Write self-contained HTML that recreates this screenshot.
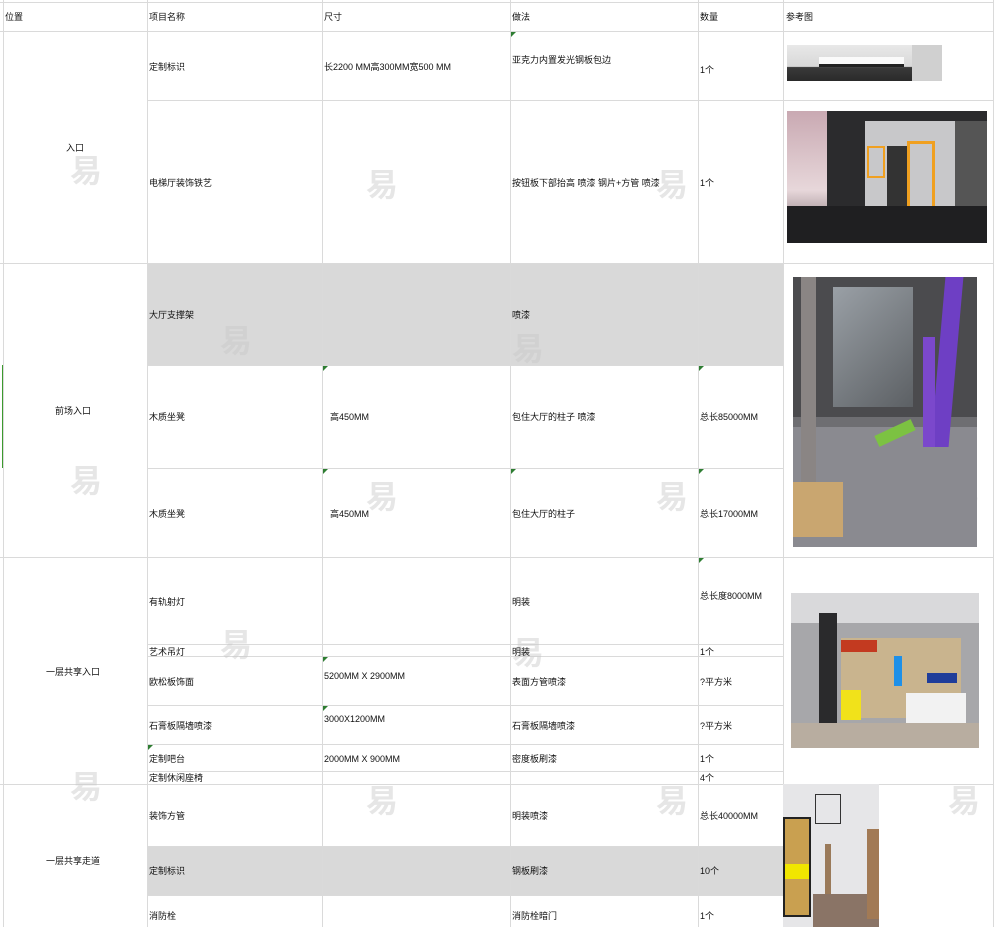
<!DOCTYPE html>
<html><head><meta charset="utf-8"><style>
*{margin:0;padding:0;box-sizing:border-box}
body{width:994px;height:927px;overflow:hidden;background:#fff;position:relative;font-family:"Liberation Sans","Noto Sans CJK SC",sans-serif;font-size:9px;color:#111}
.h{position:absolute;height:1px;background:#dadada}
.v{position:absolute;width:1px;background:#dadada}
.t{position:absolute;line-height:12px;white-space:nowrap}
.g{position:absolute;background:#d9d9d9}
.i{position:absolute;overflow:hidden}
.tri{position:absolute;width:0;height:0;border-top:5px solid #2e7d32;border-right:5px solid transparent}
.w{position:absolute;font-size:32px;line-height:34px;color:rgba(200,200,200,0.45);font-family:"Noto Sans CJK SC",sans-serif;font-weight:bold}
</style></head><body>
<div class="g" style="left:147px;top:263px;width:636px;height:102px"></div>
<div class="g" style="left:147px;top:846px;width:636px;height:49px"></div>
<div style="position:absolute;left:2px;top:365px;width:2px;height:103px;background:#3c9a2e"></div>

<div class="h" style="left:0;top:2px;width:994px"></div>
<div class="h" style="left:0;top:31px;width:994px"></div>
<div class="h" style="left:147px;top:100px;width:847px"></div>
<div class="h" style="left:0;top:263px;width:994px"></div>
<div class="h" style="left:147px;top:365px;width:636px"></div>
<div class="h" style="left:147px;top:468px;width:636px"></div>
<div class="h" style="left:0;top:557px;width:994px"></div>
<div class="h" style="left:147px;top:644px;width:636px"></div>
<div class="h" style="left:147px;top:656px;width:636px"></div>
<div class="h" style="left:147px;top:705px;width:636px"></div>
<div class="h" style="left:147px;top:744px;width:636px"></div>
<div class="h" style="left:147px;top:771px;width:636px"></div>
<div class="h" style="left:0;top:784px;width:994px"></div>
<div class="h" style="left:147px;top:846px;width:636px"></div>
<div class="h" style="left:147px;top:895px;width:636px"></div>

<div class="v" style="left:3px;top:0;height:927px"></div>
<div class="v" style="left:147px;top:0;height:927px"></div>
<div class="v" style="left:322px;top:0;height:927px"></div>
<div class="v" style="left:510px;top:0;height:927px"></div>
<div class="v" style="left:698px;top:0;height:927px"></div>
<div class="v" style="left:783px;top:0;height:927px"></div>
<div class="v" style="left:993px;top:0;height:927px"></div>

<div class="tri" style="left:511px;top:32px"></div>
<div class="tri" style="left:323px;top:366px"></div>
<div class="tri" style="left:699px;top:366px"></div>
<div class="tri" style="left:323px;top:469px"></div>
<div class="tri" style="left:511px;top:469px"></div>
<div class="tri" style="left:699px;top:469px"></div>
<div class="tri" style="left:699px;top:558px"></div>
<div class="tri" style="left:323px;top:657px"></div>
<div class="tri" style="left:323px;top:706px"></div>
<div class="tri" style="left:148px;top:745px"></div>

<div class="w" style="left:70px;top:152px">易</div>
<div class="w" style="left:366px;top:166px">易</div>
<div class="w" style="left:656px;top:166px">易</div>
<div class="w" style="left:948px;top:166px">易</div>
<div class="w" style="left:220px;top:322px">易</div>
<div class="w" style="left:512px;top:330px">易</div>
<div class="w" style="left:804px;top:330px">易</div>
<div class="w" style="left:70px;top:462px">易</div>
<div class="w" style="left:366px;top:478px">易</div>
<div class="w" style="left:656px;top:478px">易</div>
<div class="w" style="left:948px;top:478px">易</div>
<div class="w" style="left:220px;top:626px">易</div>
<div class="w" style="left:512px;top:634px">易</div>
<div class="w" style="left:804px;top:634px">易</div>
<div class="w" style="left:70px;top:768px">易</div>
<div class="w" style="left:366px;top:782px">易</div>
<div class="w" style="left:656px;top:782px">易</div>
<div class="w" style="left:948px;top:782px">易</div>

<div class="t" style="left:5px;top:11px">位置</div>
<div class="t" style="left:149px;top:11px">项目名称</div>
<div class="t" style="left:324px;top:11px">尺寸</div>
<div class="t" style="left:512px;top:11px">做法</div>
<div class="t" style="left:700px;top:11px">数量</div>
<div class="t" style="left:786px;top:11px">参考图</div>

<div class="t" style="left:149px;top:61px">定制标识</div>
<div class="t" style="left:324px;top:61px">长2200 MM高300MM宽500 MM</div>
<div class="t" style="left:512px;top:54px">亚克力内置发光钢板包边</div>
<div class="t" style="left:700px;top:64px">1个</div>
<div class="t" style="left:66px;top:142px">入口</div>
<div class="t" style="left:149px;top:177px">电梯厅装饰铁艺</div>
<div class="t" style="left:512px;top:177px">按钮板下部抬高 喷漆 钢片+方管 喷漆</div>
<div class="t" style="left:700px;top:177px">1个</div>
<div class="t" style="left:149px;top:309px">大厅支撑架</div>
<div class="t" style="left:512px;top:309px">喷漆</div>
<div class="t" style="left:55px;top:405px">前场入口</div>
<div class="t" style="left:149px;top:411px">木质坐凳</div>
<div class="t" style="left:330px;top:411px">高450MM</div>
<div class="t" style="left:512px;top:411px">包住大厅的柱子 喷漆</div>
<div class="t" style="left:700px;top:411px">总长85000MM</div>
<div class="t" style="left:149px;top:508px">木质坐凳</div>
<div class="t" style="left:330px;top:508px">高450MM</div>
<div class="t" style="left:512px;top:508px">包住大厅的柱子</div>
<div class="t" style="left:700px;top:508px">总长17000MM</div>
<div class="t" style="left:149px;top:596px">有轨射灯</div>
<div class="t" style="left:512px;top:596px">明装</div>
<div class="t" style="left:700px;top:590px">总长度8000MM</div>
<div class="t" style="left:46px;top:666px">一层共享入口</div>
<div class="t" style="left:149px;top:646px">艺术吊灯</div>
<div class="t" style="left:512px;top:646px">明装</div>
<div class="t" style="left:700px;top:646px">1个</div>
<div class="t" style="left:149px;top:676px">欧松板饰面</div>
<div class="t" style="left:324px;top:670px">5200MM X 2900MM</div>
<div class="t" style="left:512px;top:676px">表面方管喷漆</div>
<div class="t" style="left:700px;top:676px">?平方米</div>
<div class="t" style="left:149px;top:720px">石膏板隔墙喷漆</div>
<div class="t" style="left:324px;top:713px">3000X1200MM</div>
<div class="t" style="left:512px;top:720px">石膏板隔墙喷漆</div>
<div class="t" style="left:700px;top:720px">?平方米</div>
<div class="t" style="left:149px;top:753px">定制吧台</div>
<div class="t" style="left:324px;top:753px">2000MM X 900MM</div>
<div class="t" style="left:512px;top:753px">密度板刷漆</div>
<div class="t" style="left:700px;top:753px">1个</div>
<div class="t" style="left:149px;top:772px">定制休闲座椅</div>
<div class="t" style="left:700px;top:772px">4个</div>
<div class="t" style="left:149px;top:810px">装饰方管</div>
<div class="t" style="left:512px;top:810px">明装喷漆</div>
<div class="t" style="left:700px;top:810px">总长40000MM</div>
<div class="t" style="left:46px;top:855px">一层共享走道</div>
<div class="t" style="left:149px;top:865px">定制标识</div>
<div class="t" style="left:512px;top:865px">钢板刷漆</div>
<div class="t" style="left:700px;top:865px">10个</div>
<div class="t" style="left:149px;top:910px">消防栓</div>
<div class="t" style="left:512px;top:910px">消防栓暗门</div>
<div class="t" style="left:700px;top:910px">1个</div>

<div class="i" style="left:787px;top:45px;width:155px;height:36px;background:linear-gradient(180deg,#e8e8e8 0,#d8d8d8 60%,#3a3a3a 62%,#2a2a2a 100%)">
<div style="position:absolute;left:32px;top:12px;width:85px;height:10px;background:#fafafa;border-bottom:3px solid #222"></div>
<div style="position:absolute;left:125px;top:0;width:30px;height:36px;background:#d0d0d0"></div>
</div>
<div class="i" style="left:787px;top:111px;width:200px;height:132px;background:#2b2b2d">
<div style="position:absolute;left:0;top:0;width:40px;height:132px;background:linear-gradient(180deg,#c9a9b2,#e7d7da 60%,#6b5b60)"></div>
<div style="position:absolute;left:78px;top:10px;width:90px;height:85px;background:#c8c8ca"></div>
<div style="position:absolute;left:100px;top:35px;width:20px;height:60px;background:#333"></div>
<div style="position:absolute;left:80px;top:35px;width:18px;height:32px;border:2px solid #f0a020"></div>
<div style="position:absolute;left:120px;top:30px;width:28px;height:78px;border:3px solid #f0a020"></div>
<div style="position:absolute;left:168px;top:10px;width:32px;height:90px;background:#555"></div>
<div style="position:absolute;left:0;top:95px;width:200px;height:37px;background:#1f1f21"></div>
</div>
<div class="i" style="left:793px;top:277px;width:184px;height:270px;background:#6e6e72">
<div style="position:absolute;left:0;top:0;width:184px;height:140px;background:#4b4b4e"></div>
<div style="position:absolute;left:40px;top:10px;width:80px;height:120px;background:linear-gradient(135deg,#9aa0a6,#5c6064)"></div>
<div style="position:absolute;left:0;top:150px;width:184px;height:120px;background:#8a8a90"></div>
<div style="position:absolute;left:8px;top:0;width:15px;height:220px;background:#8a8584"></div>
<div style="position:absolute;left:145px;top:0;width:18px;height:170px;background:#6e3fc4;transform:skewX(-5deg)"></div>
<div style="position:absolute;left:130px;top:60px;width:12px;height:110px;background:#7b48cc"></div>
<div style="position:absolute;left:82px;top:150px;width:40px;height:12px;background:#7cc242;transform:rotate(-25deg)"></div>
<div style="position:absolute;left:0;top:205px;width:50px;height:55px;background:#c9a670"></div>
</div>
<div class="i" style="left:791px;top:593px;width:188px;height:155px;background:#a7a7aa">
<div style="position:absolute;left:0;top:0;width:188px;height:30px;background:#d9d9db"></div>
<div style="position:absolute;left:28px;top:20px;width:18px;height:135px;background:#2a2a2c"></div>
<div style="position:absolute;left:50px;top:45px;width:120px;height:80px;background:#c9b48e"></div>
<div style="position:absolute;left:50px;top:47px;width:36px;height:12px;background:#c33a20"></div>
<div style="position:absolute;left:103px;top:63px;width:8px;height:30px;background:#1e90e8"></div>
<div style="position:absolute;left:136px;top:80px;width:30px;height:10px;background:#1f3d9a"></div>
<div style="position:absolute;left:50px;top:97px;width:20px;height:30px;background:#f1e21a"></div>
<div style="position:absolute;left:115px;top:100px;width:60px;height:35px;background:#f2f2f2"></div>
<div style="position:absolute;left:0;top:130px;width:188px;height:25px;background:#b8ada0"></div>
</div>
<div class="i" style="left:783px;top:784px;width:96px;height:143px;background:#e6e6e8">
<div style="position:absolute;left:0;top:33px;width:28px;height:100px;background:#c9a050;border:2px solid #222"></div>
<div style="position:absolute;left:2px;top:80px;width:24px;height:15px;background:#f1e600"></div>
<div style="position:absolute;left:30px;top:110px;width:66px;height:33px;background:#8a7466"></div>
<div style="position:absolute;left:84px;top:45px;width:12px;height:90px;background:#a27a55"></div>
<div style="position:absolute;left:42px;top:60px;width:6px;height:50px;background:#9a7a5a"></div>
<div style="position:absolute;left:32px;top:10px;width:26px;height:30px;border:1px solid #333"></div>
</div>
</body></html>
